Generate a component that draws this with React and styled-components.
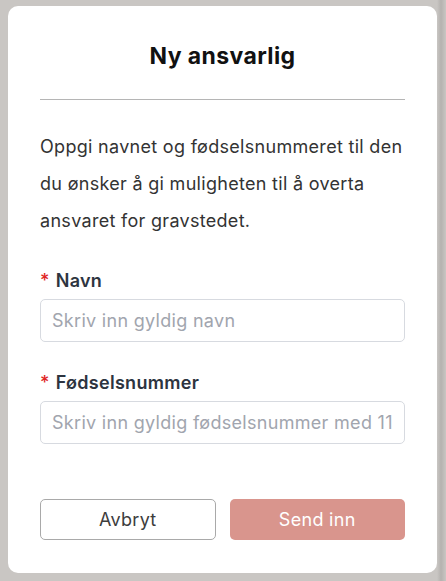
import React from "react";
import styled, { createGlobalStyle } from "styled-components";

const Global = createGlobalStyle`
  html, body { margin: 0; padding: 0; }
  body {
    background: #c8c5c2;
    font-family: Inter, "Noto Sans", sans-serif;
    -webkit-font-smoothing: antialiased;
  }
  * { box-sizing: border-box; }
`;

const Backdrop = styled.div`
  width: 446px;
  height: 581px;
  padding: 6px 9px 8px 8px;
  background:
    linear-gradient(90deg, rgba(0,0,0,0) 0, rgba(0,0,0,0) 437px, rgba(120,118,116,0.25) 441px, rgba(0,0,0,0) 446px),
    #c9c6c3;
`;

const Card = styled.div`
  background: #ffffff;
  border-radius: 10px;
  height: 567px;
  padding: 0 32px;
  display: flex;
  flex-direction: column;
`;

const Title = styled.h2`
  margin: 0;
  height: 94px;
  display: flex;
  align-items: center;
  justify-content: center;
  font-size: 23px;
  letter-spacing: 0.4px;
  font-weight: 700;
  color: #111;
  padding-top: 6px;
  border-bottom: 1px solid #b5b5b5;
`;

const Text = styled.p`
  margin: 28px 0 0;
  font-size: 18px;
  letter-spacing: 0.3px;
  line-height: 37px;
  color: #333;
`;

const Field = styled.div`
  display: flex;
  flex-direction: column;
  gap: 6px;
  margin-top: ${(p) => p.$top}px;
`;

const Label = styled.label`
  font-size: 18px;
  letter-spacing: 0.3px;
  line-height: 24px;
  font-weight: 600;
  color: #2d3440;
  display: flex;
  gap: 6px;
`;

const Star = styled.span`
  color: #e02424;
  font-weight: 500;
`;

const Input = styled.input`
  height: 43px;
  width: 100%;
  border: 1px solid #d7dae0;
  border-radius: 5px;
  padding: 0 11px;
  font-family: inherit;
  font-size: 18px;
  letter-spacing: 0.3px;
  color: #333;
  outline: none;
  &::placeholder { color: #a1a5ae; }
`;

const Actions = styled.div`
  margin-top: 55px;
  display: grid;
  grid-template-columns: 1fr 1fr;
  gap: 14px;
`;

const Button = styled.button`
  height: 41px;
  border-radius: 5px;
  font-family: inherit;
  font-size: 18px;
  letter-spacing: 0.3px;
  font-weight: 400;
  cursor: pointer;
  border: ${(p) => (p.$primary ? "none" : "1px solid #a9a9a9")};
  background: ${(p) => (p.$primary ? "#d9958d" : "#fff")};
  color: ${(p) => (p.$primary ? "#fff" : "#3d3d3d")};
`;

export default function App() {
  return (
    <>
      <Global />
      <Backdrop>
        <Card>
          <Title>Ny ansvarlig</Title>
          <Text>
            Oppgi navnet og fødselsnummeret til den du ønsker å gi muligheten til å overta ansvaret for gravstedet.
          </Text>
          <Field $top={30}>
            <Label>
              <Star>*</Star>Navn
            </Label>
            <Input placeholder="Skriv inn gyldig navn" />
          </Field>
          <Field $top={29}>
            <Label>
              <Star>*</Star>Fødselsnummer
            </Label>
            <Input placeholder="Skriv inn gyldig fødselsnummer med 11 siffer" />
          </Field>
          <Actions>
            <Button>Avbryt</Button>
            <Button $primary>Send inn</Button>
          </Actions>
        </Card>
      </Backdrop>
    </>
  );
}
